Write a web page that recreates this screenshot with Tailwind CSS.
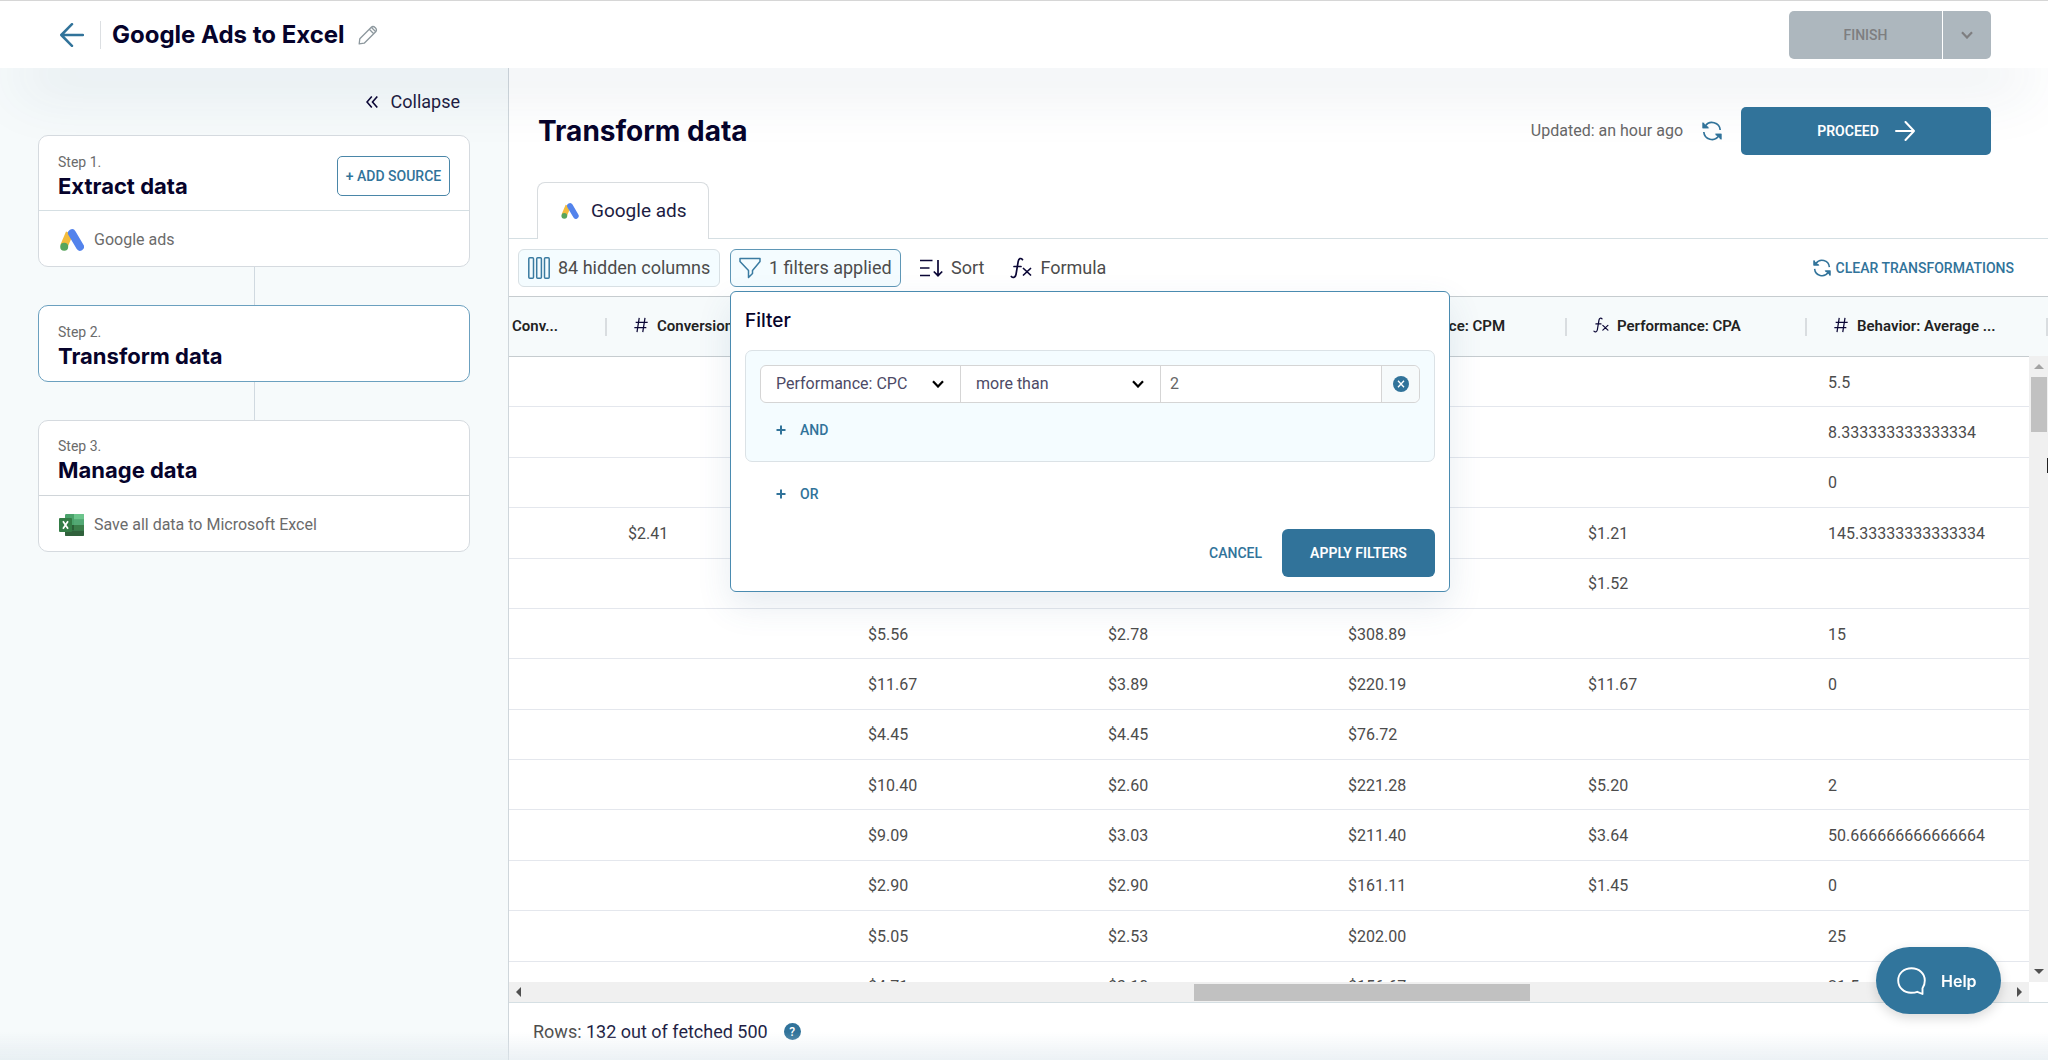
<!DOCTYPE html>
<html lang="en">
<head>
<meta charset="utf-8">
<title>Google Ads to Excel</title>
<script src="https://cdn.jsdelivr.net/npm/@tailwindcss/browser@4"></script>
</head>
<body class="flex h-screen flex-col overflow-hidden bg-white font-['Roboto',sans-serif] text-base text-[#555]">
<svg class="hidden" aria-hidden="true">
  <symbol id="ads" viewBox="0 0 24 22">
    <path d="M9.500 4 4 17" stroke="#f3bc3c" stroke-width="7.600" stroke-linecap="butt" />
    <circle cx="4.200" cy="17.700" r="4" fill="#58a55c" />
    <path d="M12 4.200 20 17.700" stroke="#5383ec" stroke-width="8" stroke-linecap="round" />
  </symbol>
  <symbol id="sync" viewBox="0 0 20 20" fill="none" stroke="#31739a" stroke-width="1.700">
    <path d="M3.200 5.200A8.200 8.200 0 0 1 18.200 9M1.800 11A8.200 8.200 0 0 0 16.800 14.800" />
    <path d="M1.400 1.800V6.400H6.200M18.600 18.200V13.600H13.800" />
    <path d="M1.400 3.200V6.400H5zM18.600 16.800V13.600H15z" fill="#31739a" />
  </symbol>
  <symbol id="fx" viewBox="0 0 22 22" fill="none" stroke="#0b0736" stroke-width="1.700" stroke-linecap="round">
    <path d="M12.500 2.600C10.800.600 8.700 1.500 8.200 4.300L6 17.500C5.500 20.300 3.200 21.400 1.300 19.500M4 9.500H11M13.500 11.500 20.500 18M20.500 11.500 13.500 18" />
  </symbol>
  <symbol id="hash" viewBox="0 0 16 18" fill="none" stroke="#0b0736" stroke-width="1.400">
    <path d="M6 1 3.500 17M12.500 1 10 17M2 6H15.500M.500 12H14" />
  </symbol>
  <symbol id="chev" viewBox="0 0 12 8" fill="none" stroke="currentColor" stroke-width="2.200"><path d="M1 1.200 6 6.500 11 1.200" /></symbol>
</svg>

<header class="relative flex h-[68px] shrink-0 items-center border-t border-[#d6d6d6] bg-white pr-[57px] pl-[60px] shadow-[0_40px_60px_-20px_rgba(40,80,110,0.13)]">
  <a href="#" aria-label="Back"><svg class="h-6 w-6" viewBox="0 0 24 24" fill="none" stroke="#31739a" stroke-width="2.500" stroke-linecap="round" stroke-linejoin="round"><path d="M23 12H1.500M12 1.200 1.300 12 12 22.800" /></svg></a>
  <div class="mr-[11px] ml-4 h-7 w-px bg-[#dcdfe2]"></div>
  <h1 class="font-['Inter',sans-serif] text-2xl font-bold text-[#06032b]">Google Ads to Excel</h1>
  <button class="ml-[13px]" aria-label="Rename"><svg class="h-5 w-5" viewBox="0 0 20 20" fill="none" stroke="#8d989e" stroke-width="1.300" stroke-linejoin="round"><path d="M1.200 18.800 1.800 13.800 13.300 2.300C15.600 0 20.200 4.300 17.700 6.800L6.200 18.200zM11.300 4.300 15.700 8.700M13.300 2.300 17.700 6.700" /></svg></button>
  <div class="ml-auto flex h-12 overflow-hidden rounded-[5px] text-[#7e7e80]">
    <button class="w-[153px] bg-[#adb7be] text-sm font-medium">FINISH</button>
    <button class="ml-px flex w-12 items-center justify-center bg-[#adb7be]" aria-label="More finish options"><svg class="h-2 w-3"><use href="#chev" /></svg></button>
  </div>
</header>

<div class="flex min-h-0 flex-1">
  <aside class="w-[509px] shrink-0 border-r border-[#cfd6db] bg-[#f6fafb] px-[38px]">
    <div class="relative flex h-[67px] items-center justify-end pr-[10px]">
      <button class="flex items-center gap-[13px] text-lg text-[#201c42]">
        <svg class="h-3 w-3" viewBox="0 0 12 12" fill="none" stroke="#0b0736" stroke-width="1.600"><path d="M5.800.500 1 6 5.800 11.500M11.300.500 6.500 6 11.300 11.500" /></svg>Collapse</button>
    </div>
    <section class="relative rounded-[10px] border border-[#d5dadf] bg-white">
      <div class="flex h-[75px] items-center justify-between border-b border-[#d5dfe3] pt-[5px] pr-[19px] pl-[19px]">
        <div>
          <p class="text-sm leading-5 text-[#6b6b6b]">Step 1.</p>
          <h2 class="font-['Inter',sans-serif] text-[22px] leading-7 font-bold text-[#06032b]">Extract data</h2>
        </div>
        <button class="h-10 w-[113px] rounded-[5px] border border-[#4a86a8] text-sm font-medium whitespace-nowrap text-[#31739a]">+ ADD SOURCE</button>
      </div>
      <div class="flex h-[55px] items-center gap-[10px] pt-[2px] pl-[21px] text-[#6b6b6b]"><svg class="h-[22px] w-6"><use href="#ads" /></svg>Google ads</div>
    </section>
    <div class="mx-auto h-[38px] w-px bg-[#d0d9e0]"></div>
    <section class="relative rounded-[10px] border border-[#6ba0bf] bg-white">
      <div class="flex h-[75px] items-center pt-[4px] pl-[19px]">
        <div>
          <p class="text-sm leading-5 text-[#6b6b6b]">Step 2.</p>
          <h2 class="font-['Inter',sans-serif] text-[22px] leading-7 font-bold text-[#06032b]">Transform data</h2>
        </div>
      </div>
    </section>
    <div class="mx-auto h-[38px] w-px bg-[#d0d9e0]"></div>
    <section class="relative rounded-[10px] border border-[#d5dadf] bg-white">
      <div class="flex h-[75px] items-center border-b border-[#d0d5d9] pt-[4px] pl-[19px]">
        <div>
          <p class="text-sm leading-5 text-[#6b6b6b]">Step 3.</p>
          <h2 class="font-['Inter',sans-serif] text-[22px] leading-7 font-bold text-[#06032b]">Manage data</h2>
        </div>
      </div>
      <div class="flex h-[55px] items-center gap-[10px] pt-[2px] pl-5 text-[#6b6b6b]">
        <svg class="h-[22px] w-[25px]" viewBox="0 0 25 22">
          <rect x="6" width="19" height="22" rx="1.200" fill="#4aa26b" /><path d="M15 0H24Q25 0 25 1V5.500H15z" fill="#6cc58c" /><path d="M15 5.500H25V11H15z" fill="#53a874" /><path d="M6 11H15V16.500H6z" fill="#2b5f38" /><path d="M15 11H25V16.500H15z" fill="#3b7e4a" /><path d="M6 16.500H25V21Q25 22 24 22H7Q6 22 6 21z" fill="#30613c" />
          <rect y="4" width="13" height="14" rx="1" fill="#347c46" /><path d="M4 7.300 9 14.700M9 7.300 4 14.700" stroke="#fff" stroke-width="1.700" />
        </svg>Save all data to Microsoft Excel</div>
    </section>
  </aside>

  <main class="flex min-w-0 flex-1 flex-col">
    <div class="relative flex h-[114px] shrink-0 items-center pt-[11px] pr-[57px] pl-[29px]">
      <h2 class="font-['Inter',sans-serif] text-[28px] font-bold text-[#06032b]">Transform data</h2>
      <div class="ml-auto flex items-center">
        <span class="text-[#666]">Updated: an hour ago</span>
        <button class="mx-[19px]" aria-label="Refresh"><svg class="h-5 w-5"><use href="#sync" /></svg></button>
        <button class="flex h-12 w-[250px] items-center justify-center gap-4 rounded-[5px] bg-[#31739a] text-sm font-semibold text-white">PROCEED
          <svg class="h-5 w-5" viewBox="0 0 20 20" fill="none" stroke="#fff" stroke-width="2" stroke-linecap="round" stroke-linejoin="round"><path d="M1 10H19M10.500 1 19 10 10.500 19" /></svg></button>
      </div>
    </div>
    <div class="relative flex h-[57px] shrink-0 border-b border-[#d5dfe3] pl-7">
      <button class="-mb-px flex w-[172px] items-center gap-3 rounded-t-[8px] border border-b-0 border-[#d8dcdf] bg-white pl-[23px] text-[19px] text-[#201c42]"><svg class="h-4 w-[18px]"><use href="#ads" /></svg>Google ads</button>
    </div>
    <div class="relative z-20 flex h-[57px] shrink-0 items-center pt-px pr-[34px] pl-[9px] text-lg">
      <button class="flex h-[38px] w-[202px] items-center gap-2 rounded-[6px] border border-[#d8e0e4] bg-[#f4fcff] pl-[9px] whitespace-nowrap text-[#4c4c4c]">
        <svg class="h-[22px] w-[22px]" viewBox="0 0 22 22" fill="none" stroke="#3a7ba1" stroke-width="1.500"><rect x=".8" y=".8" width="4.700" height="20.400" rx="1" /><rect x="8.700" y=".8" width="4.700" height="20.400" rx="1" /><rect x="16.500" y=".8" width="4.700" height="20.400" rx="1" /></svg>84 hidden columns</button>
      <div class="relative ml-[10px]">
        <button class="flex h-[38px] w-[171px] items-center gap-2 rounded-[6px] border border-[#5f97b6] bg-[#f4fcff] pl-2 whitespace-nowrap text-[#4c4c4c]">
          <svg class="h-[22px] w-[22px]" viewBox="0 0 22 22" fill="none" stroke="#3a7ba1" stroke-width="1.500" stroke-linejoin="round"><path d="M1 1.500H21V4.500L13.500 13.500V16.500L9.500 20.500V13.500L1 4.500z" /></svg>1 filters applied</button>
        <form class="absolute top-full left-0 mt-1 w-[720px] rounded-[6px] border border-[#4a8bb0] bg-white px-[14px] pb-[14px] text-base shadow-[0_14px_34px_rgba(60,100,140,0.12)]">
          <h3 class="flex h-[58px] items-center font-['Inter',sans-serif] text-[19px] font-medium text-[#06032b]">Filter</h3>
          <div class="h-[112px] rounded-[7px] border border-[#dbe2e6] bg-[#f4fcff] px-[14px] pt-[14px]">
            <div class="flex h-[38px] rounded-[6px] border border-[#d5d5d5] bg-white text-[#4d4a66]">
              <div class="relative w-[200px] border-r border-[#d5d5d5]">
                <select aria-label="Column" class="h-full w-full appearance-none pr-9 pl-[15px]"><option>Performance: CPC</option></select>
                <svg class="pointer-events-none absolute top-[14px] right-4 h-2 w-3 text-black"><use href="#chev" /></svg>
              </div>
              <div class="relative w-[200px] border-r border-[#d5d5d5]">
                <select aria-label="Condition" class="h-full w-full appearance-none pr-9 pl-[15px]"><option>more than</option></select>
                <svg class="pointer-events-none absolute top-[14px] right-4 h-2 w-3 text-black"><use href="#chev" /></svg>
              </div>
              <input aria-label="Value" value="2" class="min-w-0 flex-1 px-[9px] text-[#666]">
              <button type="button" aria-label="Remove condition" class="flex w-[38px] items-center justify-center rounded-r-[6px] border-l border-[#d5d5d5] bg-[#f6fafb]"><svg class="h-4 w-4" viewBox="0 0 16 16"><circle cx="8" cy="8" r="8" fill="#31739a" /><path d="M5 4.700 11 11.300M11 4.700 5 11.300" stroke="#fff" stroke-width="1.300" /></svg></button>
            </div>
            <button type="button" class="mt-[15px] ml-4 flex h-6 items-center gap-[14px] text-sm font-medium text-[#31739a]"><svg class="h-[10px] w-[10px]" viewBox="0 0 10 10" stroke="#31739a" stroke-width="2"><path d="M5 .5V9.500M.5 5H9.500" /></svg>AND</button>
          </div>
          <button type="button" class="mt-5 ml-[31px] flex h-6 items-center gap-[14px] text-sm font-medium text-[#31739a]"><svg class="h-[10px] w-[10px]" viewBox="0 0 10 10" stroke="#31739a" stroke-width="2"><path d="M5 .5V9.500M.5 5H9.500" /></svg>OR</button>
          <div class="mt-[23px] flex h-12 items-stretch justify-end gap-5">
            <button type="button" class="text-sm font-medium text-[#31739a]">CANCEL</button>
            <button class="w-[153px] rounded-[6px] bg-[#31739a] text-sm font-semibold text-white">APPLY FILTERS</button>
          </div>
        </form>
      </div>
      <button class="ml-[19px] flex items-center gap-2 text-[#4c4c4c]"><svg class="h-[18px] w-[23px]" viewBox="0 0 23 18" fill="none" stroke="#0b0736" stroke-width="1.700"><path d="M0 1.500H12.500M0 9H9.500M0 16.500H10M18 1V16.500M13.800 12.500 18 16.700 22.200 12.500" /></svg>Sort</button>
      <button class="ml-[26px] flex items-center gap-2 text-[#4c4c4c]"><svg class="h-[22px] w-[22px]"><use href="#fx" /></svg>Formula</button>
      <button class="ml-auto flex items-center gap-[5px] text-sm font-medium text-[#31739a]"><svg class="h-[18px] w-[18px]"><use href="#sync" /></svg>CLEAR TRANSFORMATIONS</button>
    </div>

    <div class="relative min-h-0 flex-1 overflow-hidden">
      <table class="h-[716px] w-full table-fixed border-collapse text-left">
        <colgroup><col class="w-[98px]"><col class="w-[240px]"><col class="w-[240px]"><col class="w-[240px]"><col class="w-[240px]"><col class="w-[240px]"><col></colgroup>
        <thead><tr id="head" class="h-[60px] border-y border-[#c6cccf] bg-[#f6fafb]"></tr></thead>
        <tbody id="rows" class="text-[#4c4c4c]"></tbody>
      </table>
      <div class="absolute top-[60px] right-0 bottom-5 flex w-[19px] flex-col items-center justify-between bg-[#f0f0f0] py-2">
        <div class="flex w-full flex-col items-center gap-2">
          <svg class="h-[5px] w-[10px]" viewBox="0 0 10 5"><path d="M0 5 5 0 10 5z" fill="#a3a3a3" /></svg>
          <div class="h-[55px] w-4 bg-[#c1c1c1]"></div>
        </div>
        <svg class="h-[5px] w-[10px]" viewBox="0 0 10 5"><path d="M0 0 5 5 10 0z" fill="#505050" /></svg>
      </div>
      <div class="absolute right-[19px] bottom-0 left-0 flex h-5 items-center bg-[#f0f0f0] px-[7px]">
        <svg class="h-[10px] w-[5px]" viewBox="0 0 5 10"><path d="M5 0 0 5 5 10z" fill="#505050" /></svg>
        <div class="flex-[670]"></div><div class="h-[17px] flex-[334] bg-[#c1c1c1]"></div><div class="flex-[485]"></div>
        <svg class="h-[10px] w-[5px]" viewBox="0 0 5 10"><path d="M0 0 5 5 0 10z" fill="#505050" /></svg>
      </div>
      <div class="absolute right-0 bottom-0 h-5 w-[19px] bg-white"></div>
      <div class="absolute top-[162px] right-0 h-[15px] w-px bg-[#222]"></div>
    </div>

    <footer class="flex h-[58px] shrink-0 items-center border-t border-[#d5dfe3] pl-6 text-lg text-[#4c4c4c]">
      Rows:&nbsp;<span class="text-[#201c42]">132 out of fetched 500</span>
      <button class="ml-4 flex h-[17px] w-[17px] items-center justify-center rounded-full bg-[#31739a] text-xs font-medium text-white" aria-label="About rows">?</button>
    </footer>
  </main>
</div>

<div class="pointer-events-none fixed inset-x-0 bottom-0 h-7 bg-linear-to-b from-transparent to-[#dfe8ee]/60"></div>
<button class="fixed right-[47px] bottom-[46px] z-30 flex h-[67px] w-[125px] items-center gap-[15px] rounded-full bg-[#31759c] pl-[21px] font-['Inter',sans-serif] text-base font-semibold text-white shadow-[0_4px_12px_rgba(0,0,0,0.15)]">
  <svg class="h-7 w-[29px]" viewBox="0 0 29 28" fill="none" stroke="#fff" stroke-width="1.900" stroke-linejoin="round"><path d="M25.500 21.200V27L20.300 24.800Q18 25.800 14 25.800C7 25.800 1.200 20.500 1.200 13.400S7 1.200 14.500 1.200 27.800 6.500 27.800 13.400Q27.800 18 25.500 21.200z" /></svg>Help</button>

<script>
const heads = [["", "Conv..."], ["hash", "Conversions"], ["fx", "Performance: CPV"], ["fx", "Performance: CPC"], ["fx", "Performance: CPM"], ["fx", "Performance: CPA"], ["hash", "Behavior: Average ..."]];
document.getElementById("head").innerHTML = heads.map(([icon, name]) => `<th class="p-0 text-[15px] font-semibold whitespace-nowrap text-[#222]"><div class="flex items-center ${icon ? "pl-[26px]" : "pl-[3px]"}">${icon ? `<svg class="mr-2 mb-1 h-4 w-4"><use href="#${icon}"/></svg>` : ""}${name}<span class="ml-auto h-[18px] w-[2px] bg-[#d9dde0]"></span></div></th>`).join("");
const rows = [
  ["", "", "", "", "", "5.5"],
  ["", "", "", "", "", "8.333333333333334"],
  ["", "", "", "", "", "0"],
  ["$2.41", "", "", "", "$1.21", "145.33333333333334"],
  ["", "", "", "", "$1.52", ""],
  ["", "$5.56", "$2.78", "$308.89", "", "15"],
  ["", "$11.67", "$3.89", "$220.19", "$11.67", "0"],
  ["", "$4.45", "$4.45", "$76.72", "", ""],
  ["", "$10.40", "$2.60", "$221.28", "$5.20", "2"],
  ["", "$9.09", "$3.03", "$211.40", "$3.64", "50.666666666666664"],
  ["", "$2.90", "$2.90", "$161.11", "$1.45", "0"],
  ["", "$5.05", "$2.53", "$202.00", "", "25"],
  ["", "$4.71", "$3.10", "$156.67", "", "21.5"]
];
document.getElementById("rows").innerHTML = rows.map(r => `<tr class="border-b border-[#e4e7ed]"><td></td>${r.map(c => `<td class="pt-[2px] pr-0 pb-0 pl-[21px]">${c}</td>`).join("")}</tr>`).join("");
</script>
</body>
</html>
